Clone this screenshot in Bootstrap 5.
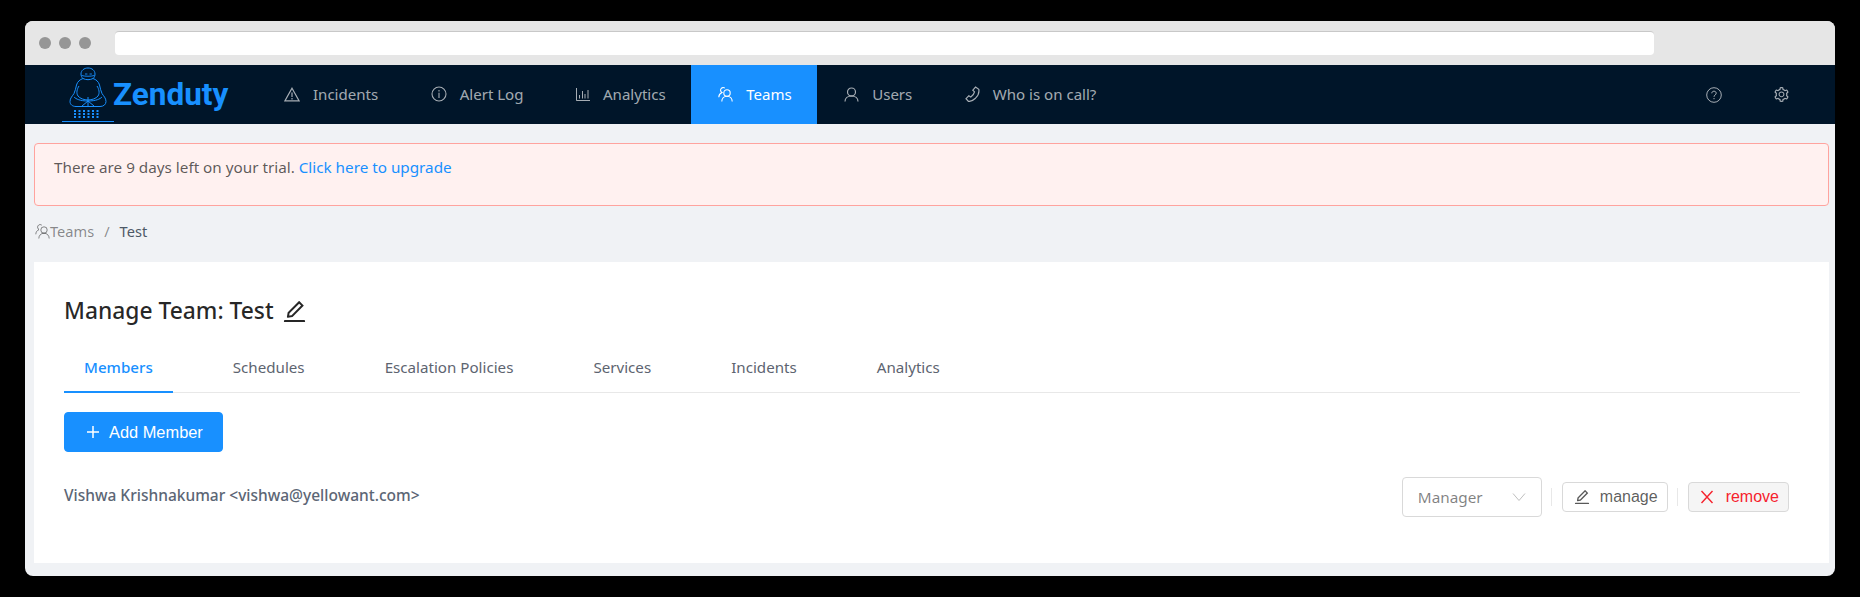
<!DOCTYPE html>
<html lang="en">
<head>
<meta charset="utf-8">
<title>Zenduty</title>
<link href="https://cdn.jsdelivr.net/npm/bootstrap@5.3.0/dist/css/bootstrap.min.css" rel="stylesheet">
<style>
html,body{height:100%;background:#000;margin:0}
body{font-family:"Noto Sans","Open Sans",sans-serif;font-size:15.3px;color:#5c6270;overflow:hidden}
.shot{padding:21px 25px 21px 25px;height:597px}
.win{height:555px;background:#f0f2f5;border-radius:8px;overflow:hidden;display:flex;flex-direction:column}
.chrome{height:44px;flex:none;background:#e6e6e6;display:flex;align-items:center;padding:0 14px;gap:8px}
.dot{width:12px;height:12px;border-radius:50%;background:#969696;flex:none}
.urlbar{width:1539px;height:24px;margin-left:16px;margin-top:-1px;background:#fff;border-top:1px solid #c8c8c8;border-radius:4px}
.topnav{height:59px;flex:none;background:#001529;display:flex;align-items:stretch;padding:0}
.brand{display:flex;align-items:center;width:232px;flex:none;padding-left:37px;text-decoration:none}
.brandname{font-family:Roboto,sans-serif;font-weight:700;font-size:31.5px;color:#1890ff;margin-left:-1px;line-height:1}
.tnav{gap:0}
.tlink{display:flex;align-items:center;gap:13px;height:59px;padding:0 25.5px 1px 27px;color:rgba(255,255,255,.65);font-size:15.05px}
.tlink svg{flex:none}
.tlink:hover,.tlink:focus{color:#fff}
.tlink.on{background:#1890ff;color:#fff}
.tools{margin-left:auto;display:flex;align-items:center;gap:51px;padding-right:45px;color:rgba(255,255,255,.65)}
.notice{margin:19px 6px 0 9px;height:63px;padding:12px 19px;background:#fff1f0;border:1px solid #ffa39e;border-radius:4px;font-size:15.25px;line-height:22px;color:rgba(0,0,0,.65)}
.notice a{color:#1890ff;text-decoration:none}
.crumbs{margin:0 0 0 10px;height:56px;display:flex;align-items:center;padding-bottom:5px;font-size:14.6px;color:rgba(0,0,0,.45)}
.crumbs .breadcrumb{margin:0;--bs-breadcrumb-divider-color:rgba(0,0,0,.45);--bs-breadcrumb-item-padding-x:10px}
.crumbs .breadcrumb-item{display:flex;align-items:center;color:rgba(0,0,0,.45)}
.crumbs .breadcrumb-item.active{color:#4d5866}
.crumbs svg{margin-right:0}
.panel{margin:0 6px 0 9px;height:301px;background:#fff;padding:29px 30px 0 30px}
.ttl{font-size:22.8px;font-weight:500;line-height:40px;color:rgba(0,0,0,.85);display:flex;align-items:center;gap:7px;margin:0}
.tabsbar{margin-top:21px;margin-right:-1px;border-bottom:1px solid #e8e8e8;height:41px;gap:0}
.tabi{display:block;line-height:31px;height:41px;color:#5d6470;font-size:15.15px;margin-right:80px}
.tabi:hover{color:#1890ff}
.tabi.on{padding:0 20px;margin-right:60px;color:#1890ff;font-weight:500;border-bottom:2px solid #1890ff}
.addbtn{display:inline-flex;align-items:center;gap:9px;margin-top:19px;width:159px;height:40px;padding:0 0 0 21px;background:#1890ff;border:1px solid #1890ff;border-radius:4px;color:#fff;font-family:"Liberation Sans",sans-serif;font-size:16.400px}
.addbtn:hover{background:#1890ff;color:#fff}
.memrow{display:flex;align-items:center;justify-content:space-between;margin-top:25px;height:40px;padding-right:10px}
.who{font-weight:500;color:#5c6675;font-size:15.5px;padding-bottom:2px}
.acts{display:flex;align-items:center}
.fakesel{width:140px;height:40px;border:1px solid #d9d9d9;border-radius:4px;padding:0 15px;display:flex;align-items:center;justify-content:space-between;font-size:15.3px;color:rgba(0,0,0,.5)}
.vsep{width:1px;height:18px;background:#e8e8e8;margin:0 10px 0 9px;flex:none}
.mini{display:flex;align-items:center;height:30px;padding:0 9px 0 10px;border:1px solid #d9d9d9;border-radius:4px;background:#fff;font-family:"Liberation Sans",sans-serif;font-size:16px;color:rgba(0,0,0,.65);gap:9px}
.mini.rm{background:#f5f5f5;color:#f5222d;padding:0 9px 0 11px;gap:12px}
</style>
</head>
<body>
<div class="shot">
<div class="win">
  <div class="chrome"><span class="dot"></span><span class="dot"></span><span class="dot"></span><div class="urlbar"></div></div>
  <nav class="topnav">
    <a class="brand" href="#">
      <svg width="52" height="56" viewBox="0 0 52 56" fill="none" stroke="#1890ff" stroke-width="1" style="margin-top:1px">
        <path d="M21 11.500c-1.500-1.200-2-2.800-2-4.500C19 3.500 22 1 26 1s7 2.500 7 6c0 1.700-.5 3.300-2 4.500"/>
        <path d="M23 7h2.400M27.500 7h2.400M19.500 8.500c4 1 9 1 13 0" stroke-width=".9"/>
        <path d="M21 11.500c-3 1-5.500 3-6.500 6.500-.8 3-1.200 6-2.500 8.500-1.500 2.500-4 4.500-4 8 0 3 2.500 5 6 5h24c3.500 0 6-2 6-5 0-3.500-2.500-5.500-4-8-1.300-2.500-1.700-5.500-2.500-8.500-1-3.500-3.500-5.500-6.500-6.500-1.500.8-3.200 1.200-5 1.200s-3.500-.4-5-1.200z"/>
        <path d="M17 19c-2 3-3 7-1 10 2 2.500 6 4 10 4s8-1.500 10-4c2-3 1-7-1-10"/>
        <path d="M26 30v9M20 39l6-5 6 5M12 30c2 2 6 4 14 4s12-2 14-4"/>
        <g fill="#1890ff" stroke="none">
          <rect x="12" y="43" width="2" height="2"/><rect x="16.500" y="43" width="2" height="2"/><rect x="21" y="43" width="2" height="2"/><rect x="25.500" y="43" width="2" height="2"/><rect x="30" y="43" width="2" height="2"/><rect x="34.500" y="43" width="2" height="2"/>
          <rect x="12" y="46" width="2" height="2"/><rect x="16.500" y="46" width="2" height="2"/><rect x="21" y="46" width="2" height="2"/><rect x="25.500" y="46" width="2" height="2"/><rect x="30" y="46" width="2" height="2"/><rect x="34.500" y="46" width="2" height="2"/>
          <rect x="12" y="49" width="2" height="2"/><rect x="16.500" y="49" width="2" height="2"/><rect x="21" y="49" width="2" height="2"/><rect x="25.500" y="49" width="2" height="2"/><rect x="30" y="49" width="2" height="2"/><rect x="34.500" y="49" width="2" height="2"/>
        </g>
        <path d="M0 54.500h52"/>
      </svg>
      <span class="brandname">Zenduty</span>
    </a>
    <ul class="nav tnav flex-nowrap">
      <li class="nav-item"><a class="nav-link tlink" href="#"><svg width="16" height="15" viewBox="0 0 16 15" fill="none" stroke="currentColor" stroke-width="1.200"><path d="M8 1.200 15 13.800H1z"/><path d="M8 5.500v4.500M8 11v1.400"/></svg>Incidents</a></li>
      <li class="nav-item"><a class="nav-link tlink" href="#"><svg width="16" height="16" viewBox="0 0 16 16" fill="none" stroke="currentColor" stroke-width="1.100"><circle cx="8" cy="8" r="7"/><path d="M8 4v1.400M8 6.800V12"/></svg>Alert Log</a></li>
      <li class="nav-item"><a class="nav-link tlink" href="#"><svg width="14" height="13" viewBox="0 0 14 13" fill="none" stroke="currentColor"><path d="M.5 0v12.500H14M3.500 7v3.500M6.500 3v7.500M9 6v4.500M12 2v8.500"/></svg>Analytics</a></li>
      <li class="nav-item"><a class="nav-link tlink on" href="#"><svg width="15" height="15" viewBox="0 0 15 15" fill="none" stroke="currentColor" stroke-width="1.100"><circle cx="9" cy="6" r="3.200"/><path d="M3.800 14.500c0-3 2.200-5.300 5.200-5.300s5.200 2.300 5.200 5.300M6.800 1.200C5.700.2 3.800.4 3 1.800c-.8 1.300-.4 3 1 3.800C2 6.500.8 8.200.8 10.300"/></svg>Teams</a></li>
      <li class="nav-item"><a class="nav-link tlink" href="#"><svg width="15" height="15" viewBox="0 0 15 15" fill="none" stroke="currentColor" stroke-width="1.200"><circle cx="7.500" cy="5" r="4"/><path d="M1 14.500c0-3.500 2.900-5.500 6.500-5.500s6.500 2 6.500 5.500"/></svg>Users</a></li>
      <li class="nav-item"><a class="nav-link tlink" href="#"><svg width="15" height="16" viewBox="0 0 15 16" fill="none" stroke="currentColor" stroke-width="1.200"><path d="M10.500 1 13.800 3.300c.6 3.200-.8 6.400-3.300 8.900-2 1.900-4.500 3.200-7 3.300L1 12.700l2.800-2.900 2 1.300c1.900-1.300 3.200-3 3.700-5.200L7.800 4.200z"/></svg>Who is on call?</a></li>
    </ul>
    <div class="tools">
      <svg width="16" height="16" viewBox="0 0 16 16" fill="none" stroke="currentColor"><circle cx="8" cy="8" r="7.300"/><path d="M5.800 6.300c0-1.300 1-2.100 2.200-2.100s2.200.8 2.200 2c0 1.800-2.200 1.700-2.200 3.600M8 11v1.200"/></svg>
      <svg width="17" height="17" viewBox="0 0 1024 1024" fill="currentColor"><path d="M924.800 625.700l-65.500-56c3.100-19 4.700-38.400 4.700-57.800s-1.600-38.800-4.700-57.800l65.500-56a32.030 32.030 0 0 0 9.300-35.200l-.9-2.600a443.740 443.740 0 0 0-79.700-137.900l-1.800-2.100a32.120 32.120 0 0 0-35.100-9.500l-81.300 28.900c-30-24.600-63.500-44-99.700-57.600l-15.700-85a32.050 32.050 0 0 0-25.800-25.700l-2.700-.5c-52.100-9.400-106.900-9.400-159 0l-2.700.5a32.050 32.050 0 0 0-25.800 25.700l-15.800 85.400a351.860 351.860 0 0 0-99 57.400l-81.900-29.100a32 32 0 0 0-35.100 9.500l-1.800 2.100a446.020 446.020 0 0 0-79.700 137.900l-.9 2.600c-4.500 12.500-.8 26.500 9.300 35.200l66.300 56.600c-3.100 18.800-4.600 38-4.600 57.100 0 19.200 1.500 38.400 4.600 57.100L99 625.500a32.030 32.030 0 0 0-9.300 35.200l.9 2.600c18.100 50.400 44.900 96.900 79.700 137.900l1.800 2.100a32.120 32.120 0 0 0 35.100 9.500l81.900-29.100c29.800 24.500 63.100 43.900 99 57.400l15.800 85.400a32.050 32.050 0 0 0 25.800 25.700l2.700.5a449.400 449.400 0 0 0 159 0l2.700-.5a32.050 32.050 0 0 0 25.800-25.700l15.700-85a350 350 0 0 0 99.700-57.600l81.300 28.900a32 32 0 0 0 35.100-9.500l1.800-2.100c34.800-41.100 61.600-87.500 79.700-137.900l.9-2.600c4.500-12.300.8-26.300-9.300-35zM788.300 465.900c2.500 15.100 3.800 30.600 3.800 46.100s-1.300 31-3.800 46.100l-6.600 40.100 74.700 63.900a370.030 370.030 0 0 1-42.600 73.600L721 702.800l-31.400 25.800c-23.900 19.600-50.500 35-79.300 45.800l-38.100 14.300-17.900 97a377.500 377.500 0 0 1-85 0l-17.900-97.200-37.800-14.500c-28.500-10.800-55-26.200-78.700-45.700l-31.400-25.900-93.400 33.200c-17-22.900-31.200-47.600-42.600-73.600l75.500-64.500-6.500-40c-2.400-14.900-3.700-30.300-3.700-45.500 0-15.300 1.200-30.600 3.700-45.500l6.500-40-75.500-64.500c11.300-26.100 25.600-50.700 42.600-73.600l93.400 33.200 31.400-25.900c23.700-19.500 50.200-34.900 78.700-45.700l37.900-14.300 17.900-97.200c28.100-3.200 56.800-3.200 85 0l17.900 97 38.100 14.300c28.700 10.800 55.400 26.200 79.300 45.800l31.400 25.800 92.800-32.900c17 22.900 31.200 47.600 42.600 73.600L781.800 426l6.500 39.900zM512 326c-97.200 0-176 78.800-176 176s78.800 176 176 176 176-78.800 176-176-78.800-176-176-176zm79.200 255.200A111.600 111.600 0 0 1 512 614c-29.900 0-58-11.700-79.200-32.800A111.600 111.600 0 0 1 400 502c0-29.900 11.700-58 32.800-79.200C454 401.600 482.100 390 512 390c29.900 0 58 11.600 79.200 32.800A111.600 111.600 0 0 1 624 502c0 29.900-11.700 58-32.800 79.200z"/></svg>
    </div>
  </nav>
  <div class="alert notice" role="alert">There are 9 days left on your trial. <a href="#">Click here to upgrade</a></div>
  <div class="crumbs">
    <ol class="breadcrumb">
      <li class="breadcrumb-item"><svg width="15" height="15" viewBox="0 0 15 15" fill="none" stroke="currentColor"><circle cx="9" cy="6" r="3.200"/><path d="M3.800 14.500c0-3 2.200-5.300 5.200-5.300s5.200 2.300 5.200 5.300M6.800 1.200C5.700.2 3.800.4 3 1.800c-.8 1.300-.4 3 1 3.800C2 6.500.8 8.200.8 10.300"/></svg>Teams</li>
      <li class="breadcrumb-item active" aria-current="page">Test</li>
    </ol>
  </div>
  <section class="panel">
    <h1 class="ttl">Manage Team: Test
      <svg width="27" height="27" viewBox="0 0 1024 1024" fill="currentColor"><path d="M257.700 752c2 0 4-.2 6-.5L431.900 722c2-.4 3.900-1.300 5.300-2.800l423.900-423.900a9.960 9.960 0 0 0 0-14.100L694.900 114.900c-1.900-1.900-4.400-2.900-7.100-2.900s-5.200 1-7.100 2.900L256.800 538.800c-1.500 1.500-2.400 3.300-2.800 5.300l-29.500 168.200a33.500 33.500 0 0 0 9.400 29.800c6.600 6.400 14.900 9.900 23.800 9.900zm67.400-174.400L687.800 215l73.300 73.300-362.700 362.600-88.900 15.700 15.600-89zM880 836H144c-17.700 0-32 14.300-32 32v36c0 4.400 3.600 8 8 8h784c4.400 0 8-3.600 8-8v-36c0-17.700-14.300-32-32-32z"/></svg>
    </h1>
    <ul class="nav tabsbar flex-nowrap">
      <li class="nav-item"><a class="tabi on text-decoration-none" href="#">Members</a></li>
      <li class="nav-item"><a class="tabi text-decoration-none" href="#">Schedules</a></li>
      <li class="nav-item"><a class="tabi text-decoration-none" href="#">Escalation Policies</a></li>
      <li class="nav-item"><a class="tabi text-decoration-none" href="#">Services</a></li>
      <li class="nav-item"><a class="tabi text-decoration-none" href="#">Incidents</a></li>
      <li class="nav-item"><a class="tabi text-decoration-none" href="#">Analytics</a></li>
    </ul>
    <button type="button" class="btn addbtn"><svg width="14" height="14" viewBox="0 0 14 14" stroke="currentColor" stroke-width="1.500"><path d="M7 1v12M1 7h12"/></svg>Add Member</button>
    <div class="memrow">
      <span class="who">Vishwa Krishnakumar &lt;vishwa@yellowant.com&gt;</span>
      <div class="acts">
        <div class="fakesel"><span>Manager</span><svg width="14" height="10" viewBox="0 0 14 10" fill="none" stroke="#bfbfbf"><path d="M1 1.500 7 8.500 13 1.500"/></svg></div>
        <span class="vsep"></span>
        <button type="button" class="btn mini"><svg width="18" height="18" viewBox="0 0 1024 1024" fill="currentColor"><path d="M257.700 752c2 0 4-.2 6-.5L431.900 722c2-.4 3.900-1.300 5.300-2.800l423.900-423.900a9.960 9.960 0 0 0 0-14.100L694.900 114.900c-1.900-1.900-4.400-2.900-7.100-2.900s-5.200 1-7.100 2.900L256.800 538.800c-1.500 1.500-2.400 3.300-2.800 5.300l-29.500 168.200a33.500 33.500 0 0 0 9.400 29.800c6.600 6.400 14.900 9.900 23.800 9.900zm67.400-174.400L687.800 215l73.300 73.300-362.700 362.600-88.900 15.700 15.600-89zM880 836H144c-17.700 0-32 14.300-32 32v36c0 4.400 3.600 8 8 8h784c4.400 0 8-3.600 8-8v-36c0-17.700-14.300-32-32-32z"/></svg>manage</button>
        <span class="vsep"></span>
        <button type="button" class="btn mini rm"><svg width="14" height="14" viewBox="0 0 14 14" fill="none" stroke="currentColor" stroke-width="1.400"><path d="M1.500 1 12.500 13M12.500 1 1.500 13"/></svg>remove</button>
      </div>
    </div>
  </section>
</div>
</div>
<script src="https://cdn.jsdelivr.net/npm/bootstrap@5.3.0/dist/js/bootstrap.bundle.min.js"></script>
</body>
</html>
